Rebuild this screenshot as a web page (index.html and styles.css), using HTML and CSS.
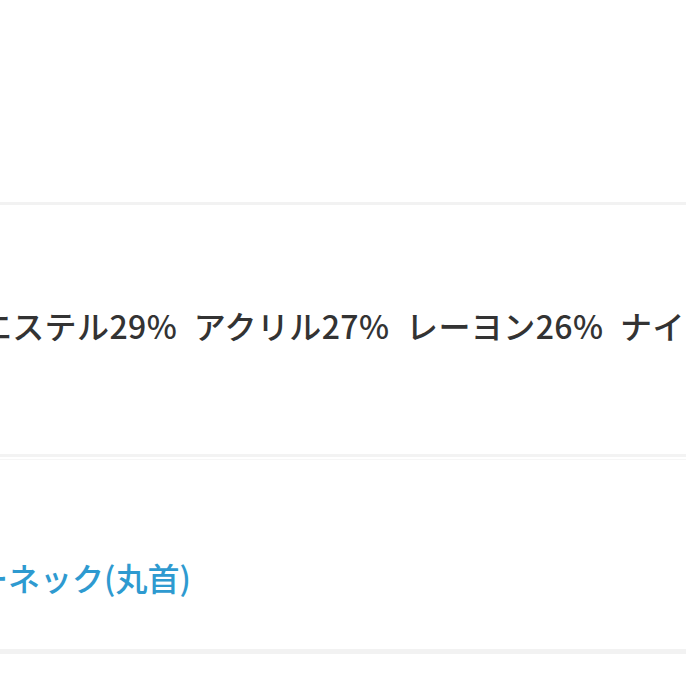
FILE: index.html
```html
<!DOCTYPE html>
<html lang="ja">
<head>
<meta charset="utf-8">
<link rel="stylesheet" href="styles.css">
</head>
<body>
<div class="page">
  <div class="spacer"></div>
  <div class="row row-material">
    <p class="value"><span class="shift-material">ポリエステル29% アクリル27% レーヨン26% ナイロン18%</span></p>
  </div>
  <div class="row row-neck">
    <p class="value link"><span class="shift-neck">クルーネック(丸首)</span></p>
  </div>
  <div class="bottom"></div>
</div>
</body>
</html>
```
FILE: styles.css
```css
html, body {
  margin: 0;
  padding: 0;
  background: #ffffff;
}
.page {
  width: 686px;
  height: 686px;
  overflow: hidden;
  font-family: "Noto Sans CJK JP", "Noto Sans", sans-serif;
}
.spacer {
  height: 202px;
}
.row {
  overflow: hidden;
}
.row-material {
  border-top: 3px solid #f2f2f2;
  border-bottom: 3px solid #f3f3f3;
  padding: 104px 0 113px;
}
.row-neck {
  margin-top: 2px;
  border-top: 1px solid #f6f6f6;
  border-bottom: 5px solid #f2f2f2;
  padding: 101px 0 56px;
}
.value {
  margin: 0;
  font-size: 32px;
  line-height: 32px;
  font-weight: 500;
  color: #333333;
  white-space: nowrap;
}
.link {
  color: #2e9ad0;
}
.shift-material {
  display: inline-block;
  margin-left: -85px;
  letter-spacing: 0.4px;
  word-spacing: 9px;
}
.shift-neck {
  display: inline-block;
  margin-left: -87px;
}
```
